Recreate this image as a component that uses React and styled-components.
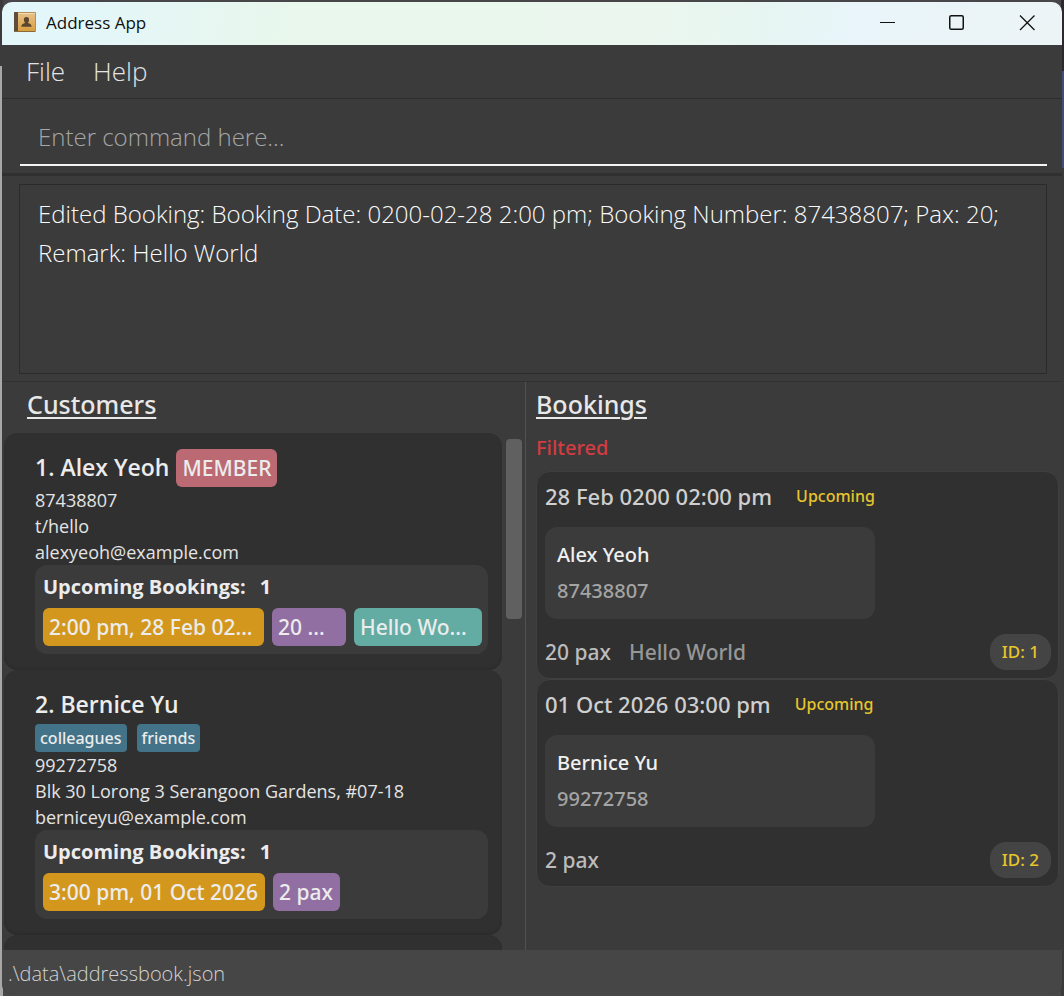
import React from "react";
import styled, { createGlobalStyle } from "styled-components";

const Global = createGlobalStyle`
  *, *::before, *::after { box-sizing: border-box; }
  body { margin: 0; background: #3c3c3c; font-family: "Open Sans", "Noto Sans", sans-serif; }
  h1, h2, h3, p, ul { margin: 0; padding: 0; font-weight: inherit; }
  ul { list-style: none; }
`;

const medium = `
  font-family: "Noto Sans", "Open Sans", sans-serif;
  font-weight: 500;
`;

const Desktop = styled.div`
  height: 100vh;
  padding: 2px;
  background:
    linear-gradient(#3c3a3c 66px, #a8a8a8 66px) left / 3px 100% no-repeat,
    linear-gradient(#2b292c 71px, #414c78 71px 168px, #3a3a3a 168px) right / 3px 100% no-repeat,
    #484648;
`;

const Window = styled.div`
  height: 100%;
  display: flex;
  flex-direction: column;
  overflow: hidden;
  border-radius: 10px;
  background: #3b3b3b;
`;

const TitleBar = styled.header`
  flex: none;
  height: 43px;
  display: flex;
  align-items: center;
  gap: 10px;
  padding: 0 0 2px 12px;
  color: #101010;
  background: linear-gradient(100deg, #e3f6f9 0%, #e3f6f9 7%, #e9f7ec 28%, #ebf7ee 60%, #e7f5f2 72%, #e9f5fa 80%, #ecf4f6 100%);
`;

const AppTitle = styled.h1`
  flex: 1;
  font-size: 17px;
  line-height: 24px;
`;

const WindowControls = styled.div`
  display: flex;
`;

const WindowButton = styled.button`
  width: 70px;
  height: 41px;
  margin: 0;
  padding: 0;
  border: 0;
  background: none;
  display: grid;
  place-items: center;
`;

const MenuBar = styled.nav`
  flex: none;
  height: 54px;
  display: flex;
  align-items: center;
  gap: 28px;
  padding: 0 24px 2px;
  border-bottom: 1px solid #2e2e2e;
`;

const MenuButton = styled.button`
  padding: 0;
  border: 0;
  background: none;
  color: #e4e4e4;
  font: 300 26px/36px "Open Sans", sans-serif;
`;

const CommandArea = styled.div`
  flex: none;
  padding: 12px 15px 7px 18px;
  border-bottom: 3px solid #303030;
`;

const CommandInput = styled.input`
  display: block;
  width: 100%;
  height: 55px;
  padding: 0 18px 2px;
  border: 0;
  border-bottom: 2px solid #f4f4f4;
  outline: 0;
  background: none;
  color: #fff;
  font: 300 24px/36px "Open Sans", sans-serif;
  &::placeholder { color: #a6a6a6; opacity: 1; }
`;

const ResultArea = styled.div`
  flex: none;
  padding: 8px 15px 7px 17px;
  border-bottom: 1px solid #323232;
`;

const ResultBox = styled.textarea`
  display: block;
  width: 100%;
  height: 190px;
  padding: 9px 18px;
  border: 1px solid #2b2b2b;
  outline: 0;
  resize: none;
  overflow: hidden;
  background: none;
  color: #fafafa;
  font: 300 24px/39px "Open Sans", sans-serif;
`;

const Panels = styled.main`
  flex: 1;
  min-height: 0;
  display: grid;
  grid-template-columns: 524px 1fr;
`;

const Panel = styled.section`
  min-width: 0;
  min-height: 0;
  display: flex;
  flex-direction: column;
`;

const CustomerPanel = styled(Panel)`
  border-right: 1px solid #525252;
  padding-left: 2px;
`;

const BookingPanel = styled(Panel)`
  padding: 0 3px 0 10px;
`;

const PanelTitle = styled.h2`
  flex: none;
  padding: 4px 0 10px;
  color: #e8e8e8;
  ${medium}
  font-size: 25px;
  line-height: 36px;
  text-decoration: underline;
  text-decoration-thickness: 2px;
  text-underline-offset: 3px;
`;

const CustomerTitle = styled(PanelTitle)`
  padding: 4px 23px 11px;
`;

const ScrollArea = styled.div`
  flex: 1;
  min-height: 0;
  display: flex;
  overflow: hidden;
`;

const CustomerList = styled.ul`
  flex: 1;
  min-width: 0;
`;

const ScrollTrack = styled.div`
  width: 23px;
  padding: 6px 3px 0 4px;
`;

const ScrollThumb = styled.div`
  height: 180px;
  border-radius: 4px;
  background: #606060;
`;

const CustomerCard = styled.li`
  min-height: 60px;
  padding: 16px 14px 16px 31px;
  border-radius: 14px;
  background: #303030;
  box-shadow: inset 0 -2px 2px #2c2c2c;
`;

const NameRow = styled.div`
  display: flex;
  align-items: center;
  gap: 7px;
  height: 38px;
  color: #ececec;
`;

const CustomerName = styled.h3`
  padding-bottom: 2px;
  font-size: 23px;
  line-height: 36px;
  font-weight: 600;
`;

const Tag = styled.span`
  flex: none;
  width: ${(p) => (p.$width ? p.$width + "px" : "auto")};
  padding: 0 6px;
  border-radius: 6px;
  background: ${(p) => p.$color};
  color: #ececec;
  ${medium}
  font-size: 21px;
  line-height: 38px;
  white-space: nowrap;
`;

const LabelRow = styled.div`
  display: flex;
  gap: 10px;
`;

const Label = styled.span`
  padding: 0 5px;
  border-radius: 4px;
  background: #437388;
  color: #ececec;
  ${medium}
  font-size: 16px;
  line-height: 28px;
`;

const Detail = styled.p`
  color: #e4e4e4;
  font-size: 18px;
  line-height: 26px;
`;

const UpcomingBox = styled.div`
  padding: 4px 6px 8px 8px;
  border-radius: 12px;
  background: #3b3b3b;
`;

const UpcomingTitle = styled.p`
  display: flex;
  gap: 14px;
  padding-bottom: 3px;
  color: #ececec;
  font-size: 20px;
  line-height: 36px;
  font-weight: 700;
`;

const TagRow = styled.div`
  display: flex;
  gap: 8px;
`;

const Filtered = styled.p`
  color: #d23c42;
  padding-bottom: 7px;
  ${medium}
  font-size: 20px;
  line-height: 32px;
`;

const BookingCard = styled.li`
  height: 208px;
  padding: 8px 7px 7px 8px;
  border: 1px solid #3f3f3f;
  border-radius: 14px;
  background: #303030;
`;

const BookingHead = styled.div`
  display: flex;
  align-items: center;
  gap: 24px;
  height: 32px;
`;

const BookingDate = styled.h3`
  color: #cfcfcf;
  ${medium}
  font-size: 22px;
  line-height: 32px;
`;

const Status = styled.span`
  color: #e6c52d;
  ${medium}
  font-size: 16px;
  line-height: 24px;
`;

const Person = styled.div`
  width: 330px;
  max-width: 100%;
  margin: 15px 0;
  padding: 10px 12px;
  border-radius: 12px;
  background: #3b3b3b;
`;

const PersonLine = styled.p`
  color: ${(p) => p.$color};
  ${medium}
  font-size: 20px;
  line-height: 36px;
`;

const BookingFoot = styled.div`
  display: flex;
  align-items: center;
  gap: 18px;
  height: 36px;
  ${medium}
  font-size: 21px;
  line-height: 36px;
`;

const Pax = styled.span`
  color: #bcbcbc;
`;

const Remark = styled.span`
  color: #979797;
`;

const IdBadge = styled.span`
  margin-left: auto;
  padding: 0 12px;
  border-radius: 16px;
  background: #444;
  color: #e6c52d;
  font-size: 17px;
  line-height: 36px;
`;

const StatusBar = styled.footer`
  flex: none;
  height: 44px;
  padding: 4px 6px 0;
  background: #464646;
  color: #d2d2d2;
  font-size: 20px;
  line-height: 40px;
  font-weight: 300;
`;

function BookIcon() {
  return (
    <svg width="22" height="21" viewBox="0 0 22 21" aria-hidden="true">
      <defs>
        <linearGradient id="cover" x1="0" y1="0" x2="0" y2="1">
          <stop offset="0" stopColor="#e6bf85" />
          <stop offset="1" stopColor="#d99f40" />
        </linearGradient>
      </defs>
      <rect x="0" y="0" width="22" height="20" rx="1" fill="#b98d50" />
      <rect x="0" y="0" width="4" height="20" rx="1" fill="#5f4d3b" />
      <path d="M4 1.500h17" stroke="#f1dcb8" />
      <rect x="4" y="2" width="17" height="17" fill="url(#cover)" />
      <rect x="1" y="19" width="20" height="1" fill="#8a6a3a" />
      <path d="M12.500 5c1.900 0 2.700 1.300 2.600 2.900-.1 1.200-.6 1.800-1 2.400v.8c1.500.6 3.400.9 3.500 3.600H7.400c.1-2.700 2-3 3.500-3.600v-.8c-.5-.6-.9-1.200-1-2.400C9.800 6.300 10.600 5 12.500 5z" fill="#5d4630" />
    </svg>
  );
}

const MEMBER = "#bb6a73";
const GOLD = "#d4971d";
const PURPLE = "#916fa3";
const TEAL = "#62aca4";

const customers = [
  {
    name: "1. Alex Yeoh",
    member: true,
    labels: [],
    details: ["87438807", "t/hello", "alexyeoh@example.com"],
    tags: [
      { text: "2:00 pm, 28 Feb 02...", color: GOLD, width: 221 },
      { text: "20 ...", color: PURPLE, width: 74 },
      { text: "Hello Wo...", color: TEAL, width: 128 },
    ],
  },
  {
    name: "2. Bernice Yu",
    labels: ["colleagues", "friends"],
    details: ["99272758", "Blk 30 Lorong 3 Serangoon Gardens, #07-18", "berniceyu@example.com"],
    tags: [
      { text: "3:00 pm, 01 Oct 2026", color: GOLD, width: 222 },
      { text: "2 pax", color: PURPLE, width: 67 },
    ],
  },
];

const bookings = [
  { id: 1, date: "28 Feb 0200 02:00 pm", name: "Alex Yeoh", phone: "87438807", pax: "20 pax", remark: "Hello World" },
  { id: 2, date: "01 Oct 2026 03:00 pm", name: "Bernice Yu", phone: "99272758", pax: "2 pax" },
];

export default function App() {
  return (
    <>
      <Global />
      <Desktop>
        <Window>
          <TitleBar>
            <BookIcon />
            <AppTitle>Address App</AppTitle>
            <WindowControls>
              <WindowButton aria-label="Minimize">
                <svg width="16" height="16" viewBox="0 0 16 16"><path d="M1 7.500h15" stroke="#111" /></svg>
              </WindowButton>
              <WindowButton aria-label="Maximize">
                <svg width="16" height="16" viewBox="0 0 16 16"><rect x="0.750" y="0.750" width="13.500" height="13.500" rx="1.500" fill="none" stroke="#111" strokeWidth="1.500" /></svg>
              </WindowButton>
              <WindowButton aria-label="Close">
                <svg width="16" height="16" viewBox="0 0 16 16"><path d="M1 .5l14.500 14.500M15.500 .5L1 15" stroke="#111" strokeWidth="1.300" /></svg>
              </WindowButton>
            </WindowControls>
          </TitleBar>
          <MenuBar>
            <MenuButton>File</MenuButton>
            <MenuButton>Help</MenuButton>
          </MenuBar>
          <CommandArea>
            <CommandInput aria-label="Command" placeholder="Enter command here..." />
          </CommandArea>
          <ResultArea>
            <ResultBox
              aria-label="Result"
              readOnly
              value="Edited Booking: Booking Date: 0200-02-28 2:00 pm; Booking Number: 87438807; Pax: 20; Remark: Hello World"
            />
          </ResultArea>
          <Panels>
            <CustomerPanel>
              <CustomerTitle>Customers</CustomerTitle>
              <ScrollArea>
                <CustomerList>
                  {customers.map((c) => (
                    <CustomerCard key={c.name}>
                      <NameRow>
                        <CustomerName>{c.name}</CustomerName>
                        {c.member && <Tag $color={MEMBER}>MEMBER</Tag>}
                      </NameRow>
                      {c.labels.length > 0 && (
                        <LabelRow>
                          {c.labels.map((l) => <Label key={l}>{l}</Label>)}
                        </LabelRow>
                      )}
                      {c.details.map((d) => <Detail key={d}>{d}</Detail>)}
                      <UpcomingBox>
                        <UpcomingTitle><span>Upcoming Bookings:</span><span>1</span></UpcomingTitle>
                        <TagRow>
                          {c.tags.map((t) => <Tag key={t.text} $color={t.color} $width={t.width}>{t.text}</Tag>)}
                        </TagRow>
                      </UpcomingBox>
                    </CustomerCard>
                  ))}
                  <CustomerCard />
                </CustomerList>
                <ScrollTrack><ScrollThumb /></ScrollTrack>
              </ScrollArea>
            </CustomerPanel>
            <BookingPanel>
              <PanelTitle>Bookings</PanelTitle>
              <Filtered>Filtered</Filtered>
              <ul>
                {bookings.map((b) => (
                  <BookingCard key={b.id}>
                    <BookingHead>
                      <BookingDate>{b.date}</BookingDate>
                      <Status>Upcoming</Status>
                    </BookingHead>
                    <Person>
                      <PersonLine $color="#f0f0f0">{b.name}</PersonLine>
                      <PersonLine $color="#a4a4a4">{b.phone}</PersonLine>
                    </Person>
                    <BookingFoot>
                      <Pax>{b.pax}</Pax>
                      {b.remark && <Remark>{b.remark}</Remark>}
                      <IdBadge>ID: {b.id}</IdBadge>
                    </BookingFoot>
                  </BookingCard>
                ))}
              </ul>
            </BookingPanel>
          </Panels>
          <StatusBar>.\data\addressbook.json</StatusBar>
        </Window>
      </Desktop>
    </>
  );
}
